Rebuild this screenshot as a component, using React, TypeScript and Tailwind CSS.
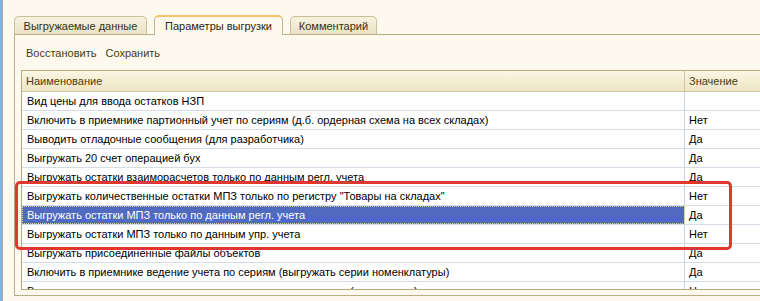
import React from "react";

const rows: { name: string; value: string; selected?: boolean }[] = [
  { name: "Вид цены для ввода остатков НЗП", value: "" },
  { name: "Включить в приемнике партионный учет по сериям (д.б. ордерная схема на всех складах)", value: "Нет" },
  { name: "Выводить отладочные сообщения (для разработчика)", value: "Да" },
  { name: "Выгружать 20 счет операцией бух", value: "Да" },
  { name: "Выгружать остатки взаиморасчетов только по данным регл. учета", value: "Да" },
  { name: "Выгружать количественные остатки МПЗ только по регистру \"Товары на складах\"", value: "Нет" },
  { name: "Выгружать остатки МПЗ только по данным регл. учета", value: "Да", selected: true },
  { name: "Выгружать остатки МПЗ только по данным упр. учета", value: "Нет" },
  { name: "Выгружать присоединенные файлы объектов", value: "Да" },
  { name: "Включить в приемнике ведение учета по сериям (выгружать серии номенклатуры)", value: "Да" },
  { name: "Выгружать остатки номенклатуры при отсутствии в приемнике (по артикулу)", value: "Нет" },
];

export default function App() {
  return (
    <div
      className="relative w-[760px] h-[301px] overflow-hidden flex bg-[#fef9ee] text-[11px] leading-[14px]"
      style={{ fontFamily: '"Liberation Sans", Arial, sans-serif' }}
    >
      <div className="w-[2px] shrink-0 bg-[#84aee0]" />
      <div className="w-[1px] shrink-0 bg-[#a8a8a8]" />
      <div className="flex-1 flex flex-col pl-[11px] pt-[15px] pb-[5px] min-w-0">
        {/* Tabs */}
        <div className="relative z-10 flex items-start gap-[7px] h-[20px] shrink-0">
          <div className="mt-[1px] h-[18px] w-[133px] flex items-center justify-center rounded-t-[5px] border border-b-0 border-[#c9bf98] bg-gradient-to-b from-[#f7f2e0] to-[#ebe3c6] text-[#3a3015]">
            Выгружаемые данные
          </div>
          <div className="h-[20px] w-[129px] flex items-center justify-center rounded-t-[5px] border border-b-0 border-[#c2b78c] border-t-2 border-t-[#f2c468] bg-[#fef9ee] text-[#2e2610]">
            Параметры выгрузки
          </div>
          <div className="mt-[1px] h-[18px] w-[87px] flex items-center justify-center rounded-t-[5px] border border-b-0 border-[#c9bf98] bg-gradient-to-b from-[#f7f2e0] to-[#ebe3c6] text-[#3a3015]">
            Комментарий
          </div>
        </div>
        {/* Panel */}
        <div className="-mt-[1px] flex-1 w-[820px] border-l border-t border-b border-[#b8ad85] flex flex-col">
          <div className="pl-[11px] pt-[10px] h-[26px] flex items-center gap-[9px] text-[#4a3b10] leading-[16px]">
            <span>Восстановить</span>
            <span>Сохранить</span>
          </div>
          <div className="ml-[6px] mt-[9px] h-[220px] w-[800px] border border-[#b5aa80] bg-white overflow-hidden">
            <div className="flex h-[21px] border-b border-[#cdc3a0] bg-gradient-to-b from-[#fbf6e4] to-[#eee5c4] text-[#4a3b0e]">
              <div className="w-[663px] border-r border-[#d0c6a2] pl-[4px] flex items-center">Наименование</div>
              <div className="flex-1 pl-[4px] flex items-center">Значение</div>
            </div>
            {rows.map((r, i) => (
              <div key={i} className="flex h-[19px] border-b border-[#d5dce5] text-black">
                <div
                  className={
                    r.selected
                      ? "w-[663px] border-r border-[#c9d2dd] pl-[5px] flex items-center whitespace-nowrap overflow-hidden bg-[#506ac0] text-white outline outline-1 outline-dotted outline-[#d6cc9c] -outline-offset-1"
                      : "w-[663px] border-r border-[#c9d2dd] pl-[5px] flex items-center whitespace-nowrap overflow-hidden"
                  }
                >
                  {r.name}
                </div>
                <div className="flex-1 pl-[4px] flex items-center">{r.value}</div>
              </div>
            ))}
          </div>
        </div>
      </div>
      {/* Red highlight frame */}
      <div className="absolute left-[15px] top-[181px] w-[717px] h-[69px] border-[3px] border-[#e0382e] rounded-[5px] pointer-events-none" />
    </div>
  );
}
